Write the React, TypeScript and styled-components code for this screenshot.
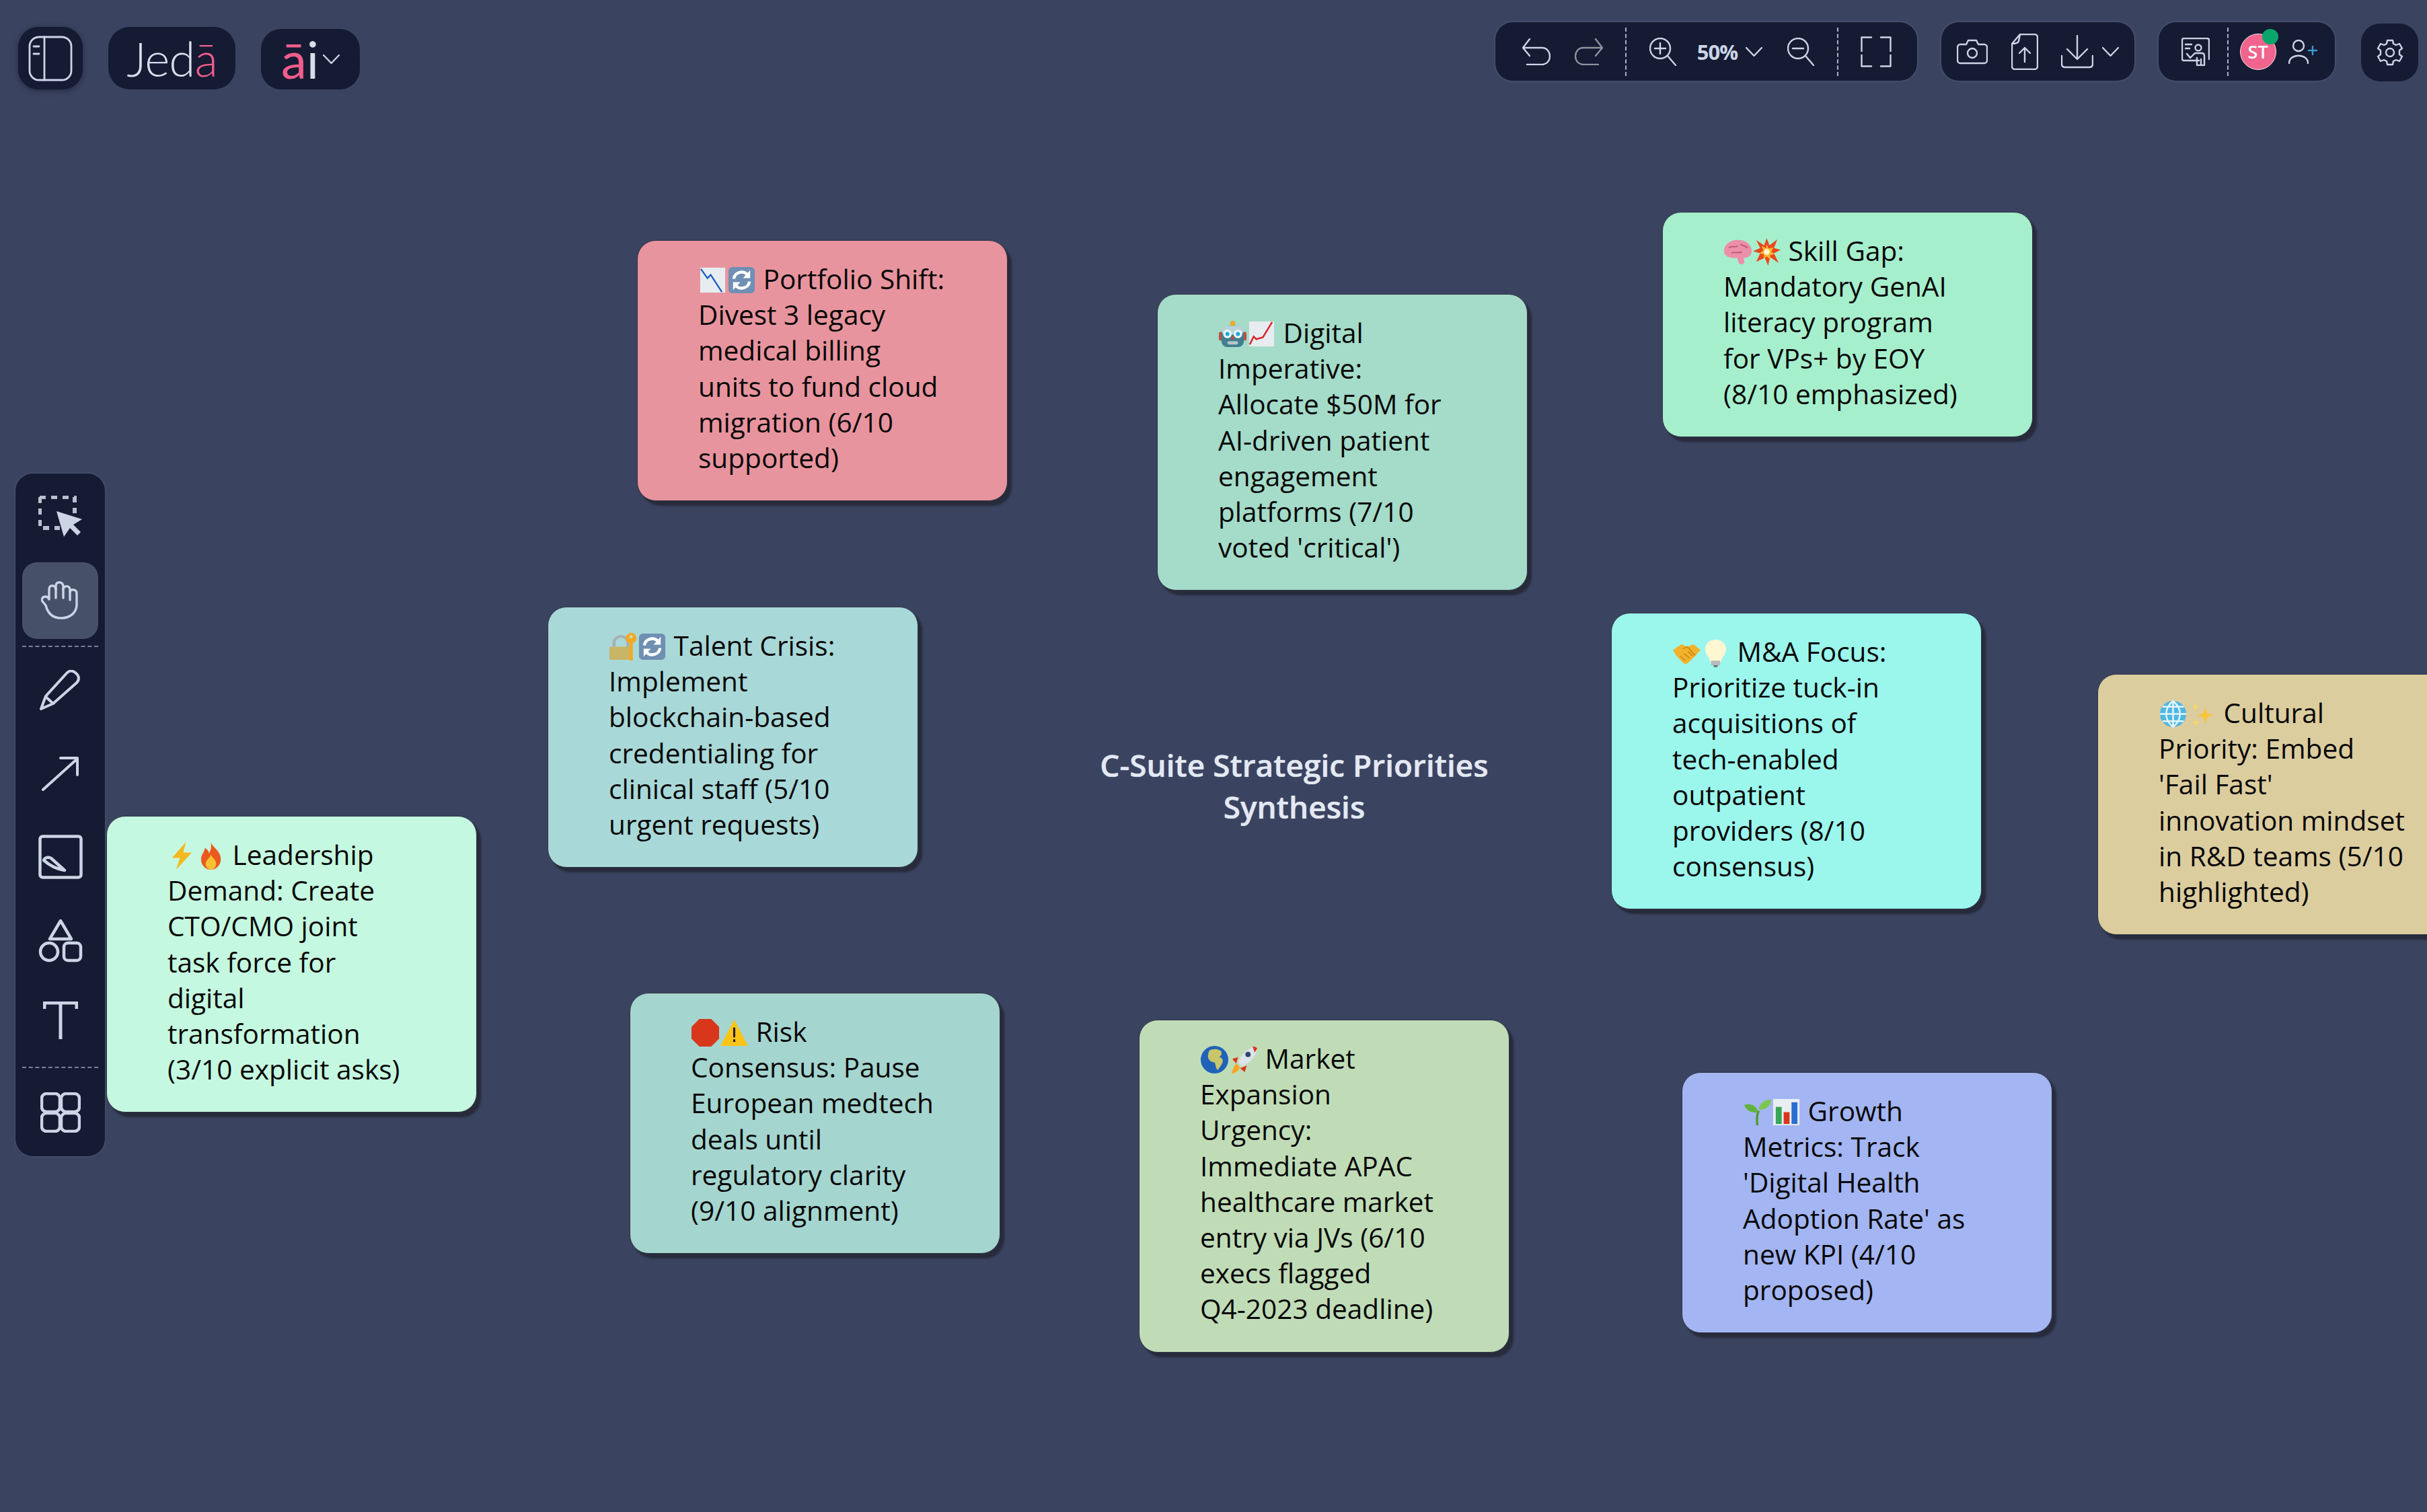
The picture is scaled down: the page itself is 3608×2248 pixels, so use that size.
import { FC, ReactNode } from 'react';
import styled, { createGlobalStyle } from 'styled-components';

const GlobalStyle = createGlobalStyle`
  html, body {
    margin: 0;
    padding: 0;
    width: 100%;
    height: 100%;
    overflow: hidden;
    background: #3a4360;
  }
  * { box-sizing: border-box; }
`;

const ICON = '#ccd5e6';

type EmojiName =
  | 'down' | 'cycle' | 'robot' | 'up' | 'brain' | 'boom' | 'lock' | 'shake' | 'bulb'
  | 'globe' | 'spark' | 'bolt' | 'fire' | 'stop' | 'warn' | 'earth' | 'rocket' | 'sprout' | 'bars';

const emojiArt: Record<EmojiName, ReactNode> = {
  down: (
    <>
      <rect x="3" y="3" width="38" height="38" fill="#e6ecf0" />
      <path d="M4 5l10 14 5-5 17 26" fill="none" stroke="#1f5fc4" strokeWidth="2.4" />
    </>
  ),
  cycle: (
    <>
      <rect x="2" y="2" width="40" height="40" rx="6" fill="#6f8fb3" />
      <path d="M10 20a12 12 0 0 1 21-6M34 24a12 12 0 0 1-21 6" fill="none" stroke="#fff" strokeWidth="4.5" />
      <path d="M35 7v12H24zM9 37V25h11z" fill="#fff" />
    </>
  ),
  robot: (
    <>
      <rect x="1" y="19" width="6" height="13" rx="2" fill="#c0503c" />
      <rect x="37" y="19" width="6" height="13" rx="2" fill="#c0503c" />
      <circle cx="22" cy="6" r="4" fill="#f0a928" />
      <rect x="5" y="10" width="34" height="32" rx="9" fill="#3f7f8f" />
      <rect x="5" y="10" width="34" height="13" rx="7" fill="#b9d3d8" />
      <circle cx="14" cy="22" r="6.5" fill="#e6f6fa" />
      <circle cx="30" cy="22" r="6.5" fill="#e6f6fa" />
      <circle cx="14" cy="22" r="3" fill="#1aa7d8" />
      <circle cx="30" cy="22" r="3" fill="#1aa7d8" />
      <path d="M22 24l3 6h-6z" fill="#d8452e" />
      <rect x="14" y="33" width="16" height="5" rx="2" fill="#b7c4c8" />
    </>
  ),
  up: (
    <>
      <rect x="3" y="3" width="38" height="38" fill="#e6ecf0" />
      <path d="M4 38l6-12 4 4 10-3L38 4" fill="none" stroke="#d8262c" strokeWidth="2.6" />
    </>
  ),
  brain: (
    <>
      <path d="M1 22C0 11 11 3 24 4c12 0 20 9 19 18-1 7-7 9-12 9l1 8c-3 3-8 2-9-1l-2-7C12 32 2 30 1 22z" fill="#ec8fa9" />
      <path d="M8 16c4-4 9 0 14-3M12 24c5-3 9 1 16-2M26 10c3 3 7 2 11 6" fill="none" stroke="#bf5c7e" strokeWidth="2" />
    </>
  ),
  boom: (
    <>
      <path d="M22 1l4 11 12-9-5 13 10 3-10 5 7 15-13-9-3 13-5-12-13 6 6-13-11-3 11-5L6 4l12 8z" fill="#e8471f" />
      <path d="M22 11l3 6 7-2-3 7 5 3-7 2 1 7-6-5-5 4 1-7-7-2 6-4-3-7 7 3z" fill="#fbb62e" />
      <circle cx="22" cy="22" r="4.5" fill="#fff6d0" />
    </>
  ),
  lock: (
    <>
      <path d="M8 24V14a11 11 0 0 1 21 0v10" fill="none" stroke="#a8b0b4" strokeWidth="4.5" />
      <rect x="1" y="22" width="31" height="20" rx="2" fill="#c9b566" />
      <circle cx="34" cy="9" r="8" fill="#f4a91f" />
      <rect x="31.5" y="12" width="5" height="31" fill="#f4a91f" />
      <circle cx="34" cy="7" r="2.4" fill="#c9d8d8" />
    </>
  ),
  shake: (
    <>
      <path d="M1 18l13-9 9 4 9-4 11 9-10 11-10 9c-3 2-6 0-8-2L6 26z" fill="#f2b32b" />
      <path d="M16 16l7-3 8 9 4 4M12 27l8 7M18 23l8 7M24 20l7 7" fill="none" stroke="#d38b16" strokeWidth="2" />
    </>
  ),
  bulb: (
    <>
      <path d="M22 2c10 0 16 7 16 15 0 8-7 11-8 20H14c-1-9-8-12-8-20C6 9 12 2 22 2z" fill="#fff6d2" />
      <rect x="15" y="34" width="14" height="7" rx="1" fill="#b5bcc0" />
      <path d="M18 41h8l-2 3h-4z" fill="#70767a" />
    </>
  ),
  globe: (
    <>
      <circle cx="22" cy="22" r="20" fill="#4fb7e4" />
      <path d="M22 2c-14 12-14 28 0 40M22 2c14 12 14 28 0 40M22 2v40M2 22h40M6 11h32M6 33h32" fill="none" stroke="#e4f5fb" strokeWidth="2.6" />
    </>
  ),
  spark: (
    <>
      <path d="M27 12l3 9 9 3-9 3-3 9-3-9-9-3 9-3z" fill="#f8c636" />
      <path d="M12 5l1.500 4.500L18 11l-4.500 1.500L12 17l-1.500-4.500L6 11l4.500-1.500zM13 29l1.500 4.500L19 35l-4.500 1.500L13 41l-1.500-4.500L7 35l4.500-1.500z" fill="#f8d56a" />
    </>
  ),
  bolt: <path d="M28 1L7 25h12l-6 18 24-26H24z" fill="#f5b820" />,
  fire: (
    <>
      <path d="M22 1c3 9 15 13 15 26 0 9-7 16-15 16S7 36 7 27c0-7 5-10 6-17 4 2 6 5 6 8 3-4 4-10 3-17z" fill="#ea5a1f" />
      <path d="M22 20c2 5 8 8 8 14 0 5-4 9-8 9s-8-4-8-9c0-6 7-8 8-14z" fill="#fbc132" />
    </>
  ),
  stop: <path d="M13 1h18l12 12v18L31 43H13L1 31V13z" fill="#d8371c" />,
  warn: (
    <>
      <path d="M22 2l21 40H1z" fill="#fcc419" />
      <rect x="20.400" y="14" width="3.200" height="15" fill="#222" />
      <rect x="20.400" y="32" width="3.200" height="4" fill="#222" />
    </>
  ),
  earth: (
    <>
      <circle cx="22" cy="22" r="21" fill="#1f62b8" />
      <path d="M14 8c6-3 13-3 18 1 2 4 0 8-3 9 4 1 7 4 5 9-2 4-5 7-7 11-4-4-3-9-5-12-5 0-9-3-10-8 0-4 1-7 2-10z" fill="#c8c66a" />
    </>
  ),
  rocket: (
    <>
      <path d="M40 2C29 4 19 14 14 26l6 6c12-5 21-15 23-27z" fill="#dde3ea" />
      <path d="M36 2c2 0 5 0 7 3l-4 6z" fill="#d8371c" />
      <circle cx="29" cy="14" r="4" fill="#30436e" />
      <path d="M14 18l-9 3 6 7zM27 31l-3 10-7-6z" fill="#d8371c" />
      <path d="M11 28l6 6c-3 5-7 8-13 10 1-6 3-11 7-16z" fill="#f6a623" />
    </>
  ),
  sprout: (
    <>
      <path d="M22 42c-1-10-1-15 2-22" fill="none" stroke="#4f9a30" strokeWidth="3.500" />
      <path d="M23 22C14 24 5 20 2 11c10-3 19 1 21 11z" fill="#62b33d" />
      <path d="M24 18c1-9 8-15 19-15-1 10-8 16-19 15z" fill="#7dc74e" />
    </>
  ),
  bars: (
    <>
      <rect x="2" y="2" width="40" height="40" fill="#e9eef2" />
      <rect x="6" y="14" width="9" height="26" fill="#37a657" />
      <rect x="18" y="22" width="9" height="18" fill="#d8371c" />
      <rect x="30" y="7" width="9" height="33" fill="#2a6fd0" />
    </>
  ),
};

const EmojiSvg = styled.svg`
  width: 43px;
  height: 43px;
  display: inline-block;
  vertical-align: -8px;
`;

const Emoji: FC<{ name: EmojiName }> = ({ name }) => (
  <EmojiSvg viewBox="0 0 44 44">{emojiArt[name]}</EmojiSvg>
);

type Note = {
  x: number;
  y: number;
  bg: string;
  icons: [EmojiName, EmojiName];
  text: string;
};

const notes: Note[] = [
  { x: 947, y: 357, bg: '#e8949e', icons: ['down', 'cycle'], text: 'Portfolio Shift: Divest 3 legacy medical billing units to fund cloud migration (6/10 supported)' },
  { x: 1720, y: 437, bg: '#a4dbc9', icons: ['robot', 'up'], text: "Digital Imperative: Allocate $50M for AI-driven patient engagement platforms (7/10 voted 'critical')" },
  { x: 2471, y: 315, bg: '#a6efcd', icons: ['brain', 'boom'], text: 'Skill Gap: Mandatory GenAI literacy program for VPs+ by EOY (8/10 emphasized)' },
  { x: 814, y: 902, bg: '#a9d8d8', icons: ['lock', 'cycle'], text: 'Talent Crisis: Implement blockchain-based credentialing for clinical staff (5/10 urgent requests)' },
  { x: 2395, y: 911, bg: '#9bf6ec', icons: ['shake', 'bulb'], text: 'M&A Focus: Prioritize tuck-in acquisitions of tech-enabled outpatient providers (8/10 consensus)' },
  { x: 3118, y: 1002, bg: '#dccd9f', icons: ['globe', 'spark'], text: "Cultural Priority: Embed 'Fail Fast' innovation mindset in R&D teams (5/10 highlighted)" },
  { x: 158, y: 1213, bg: '#c5f8e0', icons: ['bolt', 'fire'], text: 'Leadership Demand: Create CTO/CMO joint task force for digital transformation (3/10 explicit asks)' },
  { x: 936, y: 1476, bg: '#a5d5cf', icons: ['stop', 'warn'], text: 'Risk Consensus: Pause European medtech deals until regulatory clarity (9/10 alignment)' },
  { x: 1693, y: 1516, bg: '#c0dcb7', icons: ['earth', 'rocket'], text: 'Market Expansion Urgency: Immediate APAC healthcare market entry via JVs (6/10 execs flagged\nQ4-2023 deadline)' },
  { x: 2500, y: 1594, bg: '#a3b5f2', icons: ['sprout', 'bars'], text: "Growth Metrics: Track 'Digital Health Adoption Rate' as new KPI (4/10 proposed)" },
];

const Svg: FC<{ w: number; h: number; children: ReactNode; color?: string }> = ({ w, h, children, color = ICON }) => (
  <svg width={w} height={h} viewBox={`0 0 ${w} ${h}`} fill="none" stroke={color} strokeWidth="2.4" strokeLinecap="round" strokeLinejoin="round">
    {children}
  </svg>
);

const Chevron = () => (
  <Svg w={25} h={14}>
    <path d="M1 1l11.500 12L24 1" />
  </Svg>
);

const ZoomIcon: FC<{ plus?: boolean }> = ({ plus }) => (
  <Svg w={40} h={42}>
    <circle cx="16" cy="16" r="15" />
    <path d="M27 27l12 14M8 16h16" />
    {plus && <path d="M16 8v16" />}
  </Svg>
);

export default function App() {
  return (
    <Canvas>
      <GlobalStyle />
      {notes.map(({ x, y, bg, icons, text }) => (
        <NoteCard key={text} $bg={bg} style={{ left: x, top: y }}>
          <Emoji name={icons[0]} />
          <Emoji name={icons[1]} /> {text}
        </NoteCard>
      ))}
      <CanvasTitle>
        C-Suite Strategic Priorities
        <br />
        Synthesis
      </CanvasTitle>

      <TopBar>
        <TopLeft>
          <SquareButton>
            <Svg w={66} h={68}>
              <rect x="2" y="2" width="62" height="64" rx="14" strokeWidth="2.800" />
              <path d="M24 2v64M8 16h8M8 27h8" strokeWidth="2.800" />
            </Svg>
          </SquareButton>
          <Brand>
            Jed<Pink>ā</Pink>
          </Brand>
          <AiMenu>
            <AiText>
              <Pink>ā</Pink>i
            </AiText>
            <Chevron />
          </AiMenu>
        </TopLeft>

        <TopRight>
          <Group $pad="0 38px 0 40px" $width={627}>
            <Section $gap={36}>
              <Svg w={42} h={40}>
                <path d="M11 1L1 14l10 12M1 14h28c16 0 16 25 0 25H7" />
              </Svg>
              <Svg w={42} h={40} color="#8f939c">
                <path d="M31 1l10 13-10 12M41 14H13c-16 0-16 25 0 25h22" />
              </Svg>
            </Section>
            <Dash />
            <Section $gap={34}>
              <ZoomIcon plus />
              <Percent>
                <PercentText>50%</PercentText>
                <Chevron />
              </Percent>
              <ZoomIcon />
            </Section>
            <Dash />
            <Svg w={46} h={46}>
              <path d="M16 1.500H1.500V22M30 1.500h14.500V22M16 44.500H1.500V28M30 44.500h14.500V28" />
            </Svg>
          </Group>

          <Group $pad="0 23px" $width={287}>
            <Svg w={46} h={38}>
              <path d="M5 8h9l3-6h12l3 6h9c2 0 4 2 4 4v20c0 2-2 4-4 4H5c-2 0-4-2-4-4V12c0-2 2-4 4-4z" />
              <circle cx="23" cy="21" r="7" />
            </Svg>
            <Svg w={40} h={54}>
              <path d="M13 1h22c2 0 4 2 4 4v44c0 2-2 4-4 4H5c-2 0-4-2-4-4V15zM13 1l-2 10c-1 3-6 4-10 4" />
              <path d="M20 42V21M12 29l8-8 8 8" />
            </Svg>
            <Download>
              <Svg w={48} h={50}>
                <path d="M24 1v34M9 21l15 15 15-15M1 31v12c0 3 2 5 5 5h36c3 0 5-2 5-5V31" />
              </Svg>
              <Chevron />
            </Download>
          </Group>

          <Group $pad="0 0 0 34px" $width={262}>
            <Svg w={42} h={42}>
              <path d="M26 34H4c-2 0-3-1-3-3V4c0-2 1-3 3-3h34c2 0 3 1 3 3v28" />
              <path d="M6 10h9M6 16h6" />
              <circle cx="25" cy="15" r="4.500" />
              <path d="M8 24l5 6 7-7h10c3 0 4 2 4 4v14H23V30M29 41v-9" />
            </Svg>
            <Dash $offset={25} />
            <Avatar>
              ST
              <OnlineDot />
            </Avatar>
            <AddUser>
              <Svg w={44} h={36}>
                <ellipse cx="15" cy="9" rx="8" ry="8" />
                <path d="M1 35c0-15 28-15 28 0" />
                <path d="M30 16h12M36 10v12" stroke="#3f97d0" />
              </Svg>
            </AddUser>
          </Group>

          <SettingsButton>
            <Svg w={40} h={40}>
              <path d="M16 2h8l1 5 4 2 5-2 4 7-4 3v6l4 3-4 7-5-2-4 2-1 5h-8l-1-5-4-2-5 2-4-7 4-3v-6l-4-3 4-7 5 2 4-2z" />
              <circle cx="20" cy="20" r="6" />
            </Svg>
          </SettingsButton>
        </TopRight>
      </TopBar>

      <SideTools>
        <Tool $h={74}>
          <svg width="66" height="64" viewBox="0 0 66 64">
            <path d="M2 2h52v24M2 2v46h30" fill="none" stroke="#b8c0cf" strokeWidth="6" strokeDasharray="9 8" />
            <path d="M27 23l38 12-13 8 11 11-5 5-11-11-9 13z" fill={ICON} />
          </svg>
        </Tool>
        <Tool $h={114} $active>
          <Svg w={58} h={60}>
            <path
              d="M7 37l-5-6c-2-3 0-7 5-7 2 0 4 2 5 4V13c0-7 9-7 10 0V8c0-7 10-7 11 0v5c1-6 10-6 10 1v3c1-5 10-4 10 2v17c0 11-9 20-23 20-12 0-20-7-23-19z"
              strokeWidth="3.400"
            />
            <path d="M22 12v14M33 12v14M43 17v12" strokeWidth="3.400" />
          </Svg>
        </Tool>
        <ToolDivider />
        <Tool>
          <Svg w={62} h={60}>
            <path d="M40 5c4-5 10-4 14 0 5 4 5 10 1 14L20 50 2 58l7-19z" strokeWidth="4" />
            <path d="M9 40l11 10" strokeWidth="4" />
          </Svg>
        </Tool>
        <Tool>
          <Svg w={56} h={52}>
            <path d="M2 50L53 4M28 3h25v25" strokeWidth="4" />
          </Svg>
        </Tool>
        <Tool>
          <Svg w={66} h={66}>
            <rect x="2.500" y="2.500" width="61" height="61" rx="4" strokeWidth="4.500" />
            <path d="M8 38c2-5 8-5 11-3l20 18c-12-2-22-7-31-15z" strokeWidth="4.500" />
          </Svg>
        </Tool>
        <Tool>
          <Svg w={66} h={66}>
            <path d="M33 4L49 31H17z" strokeWidth="4.500" />
            <circle cx="16" cy="50" r="13" strokeWidth="4.500" />
            <rect x="38" y="37" width="25" height="26" rx="6" strokeWidth="4.500" />
          </Svg>
        </Tool>
        <Tool $h={116}>
          <Svg w={52} h={58}>
            <path d="M2 11V2h48v9M26 2v54" strokeWidth="5" strokeLinecap="butt" />
          </Svg>
        </Tool>
        <ToolDivider />
        <Tool $h={128}>
          <Svg w={60} h={60}>
            <rect x="2" y="2" width="27" height="27" rx="7" strokeWidth="4.500" />
            <rect x="31" y="2" width="27" height="27" rx="7" strokeWidth="4.500" />
            <rect x="2" y="31" width="27" height="27" rx="7" strokeWidth="4.500" />
            <rect x="31" y="31" width="27" height="27" rx="7" strokeWidth="4.500" />
          </Svg>
        </Tool>
      </SideTools>
    </Canvas>
  );
}

const Canvas = styled.div`
  position: relative;
  width: 3608px;
  height: 2248px;
  overflow: hidden;
  background: #3a4360;
  font-family: 'Open Sans', 'Liberation Sans', sans-serif;
`;

const NoteCard = styled.div<{ $bg: string }>`
  position: absolute;
  width: 551px;
  padding: 30px 90px 37px;
  border-radius: 28px;
  background: ${({ $bg }) => $bg};
  border: 1px solid #2f3445;
  box-shadow: 6px 7px 3px #272b3b;
  color: #070707;
  font-size: 40.6px;
  line-height: 53.2px;
  white-space: pre-line;
`;

const CanvasTitle = styled.div`
  position: absolute;
  left: 1524px;
  top: 1106px;
  width: 800px;
  text-align: center;
  color: #e3e9f2;
  font-size: 46px;
  font-weight: 600;
  line-height: 62px;
  text-shadow: 0 0 1px #e3e9f2;
`;

const TopBar = styled.header`
  position: absolute;
  top: 33px;
  left: 27px;
  right: 13px;
  display: flex;
  justify-content: space-between;
  align-items: flex-start;
`;

const TopLeft = styled.div`
  display: flex;
  align-items: flex-end;
  gap: 38px;
  padding-top: 7px;
`;

const TopRight = styled.div`
  display: flex;
  gap: 36px;
`;

const Panel = styled.div`
  display: flex;
  align-items: center;
  background: #151b33;
  box-shadow: 0 0 3px 1px rgba(140, 150, 180, 0.25);
`;

const SquareButton = styled(Panel)`
  width: 96px;
  height: 93px;
  justify-content: center;
  border-radius: 30px;
  box-shadow: 0 2px 8px rgba(10, 14, 30, 0.45);
`;

const Brand = styled(Panel)`
  width: 189px;
  height: 93px;
  justify-content: center;
  border-radius: 32px;
  box-shadow: none;
  color: #d7deea;
  font-family: Lato, 'Open Sans', sans-serif;
  font-size: 71px;
  font-weight: 300;
  letter-spacing: -1px;
  line-height: 1;
`;

const Pink = styled.span`
  color: #f25d8c;
`;

const AiMenu = styled(Panel)`
  width: 147px;
  height: 90px;
  justify-content: center;
  gap: 6px;
  border-radius: 30px;
  box-shadow: none;
`;

const AiText = styled.span`
  color: #d7deea;
  font-family: Lato, 'Open Sans', sans-serif;
  font-size: 76px;
  font-weight: 400;
  line-height: 1;
`;

const Group = styled(Panel)<{ $pad: string; $width: number }>`
  width: ${({ $width }) => $width}px;
  height: 87px;
  padding: ${({ $pad }) => $pad};
  justify-content: space-between;
  border-radius: 26px;
`;

const Section = styled.div<{ $gap: number }>`
  display: flex;
  align-items: center;
  gap: ${({ $gap }) => $gap}px;
`;

const Dash = styled.span<{ $offset?: number }>`
  width: 0;
  height: 72px;
  margin-left: ${({ $offset = 0 }) => $offset}px;
  border-left: 2px dashed #aab2c4;
`;

const Percent = styled.div`
  display: flex;
  align-items: center;
  gap: 12px;
  margin: 0 3px 0 -3px;
`;

const PercentText = styled.span`
  color: ${ICON};
  font-size: 31px;
  font-weight: 700;
  letter-spacing: -1px;
`;

const Download = styled.div`
  display: flex;
  align-items: center;
  gap: 13px;
`;

const Avatar = styled.div`
  position: relative;
  display: flex;
  align-items: center;
  justify-content: center;
  width: 54px;
  height: 54px;
  margin-left: 15px;
  border-radius: 50%;
  background: #f0648e;
  border: 1px solid #f5e3ea;
  color: #fff;
  font-size: 27px;
  font-weight: 600;
`;

const OnlineDot = styled.span`
  position: absolute;
  top: -8px;
  right: -4px;
  width: 24px;
  height: 23px;
  border-radius: 50%;
  background: #0aa56a;
`;

const AddUser = styled.div`
  display: flex;
  margin: 0 25px 0 17px;
`;

const SettingsButton = styled(Panel)`
  width: 85px;
  height: 86px;
  justify-content: center;
  border-radius: 28px;
  margin: 2px 0 0 3px;
  box-shadow: none;
`;

const SideTools = styled.nav`
  position: absolute;
  left: 23px;
  top: 704px;
  width: 133px;
  height: 1015px;
  padding: 28px 10px 0;
  display: flex;
  flex-direction: column;
  border-radius: 26px;
  background: #151b33;
  box-shadow: 0 0 3px 1px rgba(140, 150, 180, 0.2);
`;

const Tool = styled.div<{ $active?: boolean; $h?: number }>`
  display: flex;
  align-items: center;
  justify-content: center;
  height: ${({ $h = 124 }) => $h}px;
  flex: none;
  border-radius: 22px;
  background: ${({ $active }) => ($active ? '#475069' : 'transparent')};

  &:first-child {
    margin-bottom: 30px;
  }
`;

const ToolDivider = styled.hr`
  width: 100%;
  height: 0;
  flex: none;
  margin: 10px 0 2px;
  border: 0;
  border-top: 2px dashed #7a8298;
`;
